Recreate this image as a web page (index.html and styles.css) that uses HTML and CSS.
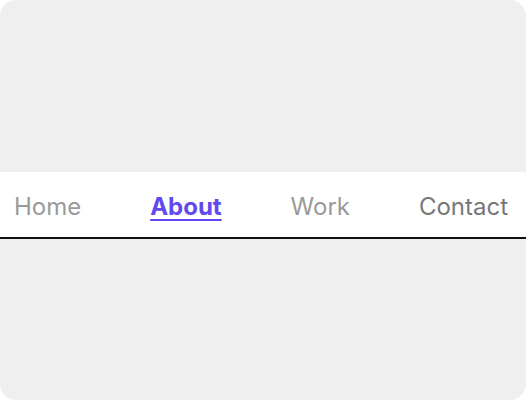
FILE: index.html
```html
<!DOCTYPE html>
<html>
<head>
<meta charset="utf-8">
<link rel="stylesheet" href="styles.css">
</head>
<body>
<div class="frame">
  <nav class="nav">
    <a class="item" href="#">Home</a>
    <a class="item active" href="#">About</a>
    <a class="item" href="#">Work</a>
    <a class="item hover" href="#">Contact</a>
  </nav>
</div>
</body>
</html>
```
FILE: styles.css
```css
html, body {
  margin: 0;
  padding: 0;
  background: #ffffff;
}
.frame {
  width: 526px;
  height: 400px;
  background: #efefef;
  border-radius: 16px;
  padding-top: 172px;
  box-sizing: border-box;
  font-family: Inter, "Noto Sans", sans-serif;
}
.nav {
  display: flex;
  justify-content: space-between;
  align-items: center;
  height: 65px;
  padding: 5px 18px 0 14px;
  box-sizing: content-box;
  height: 60px;
  background: #ffffff;
  border-bottom: 2px solid #111111;
}
.item {
  font-size: 24px;
  color: #9a9a9a;
  text-decoration: none;
  line-height: 1;
}
.item.active {
  color: #6149f0;
  font-weight: 700;
  text-decoration: underline;
  text-decoration-thickness: 2px;
  text-underline-offset: 4px;
}
.item.hover {
  color: #777777;
}
```
